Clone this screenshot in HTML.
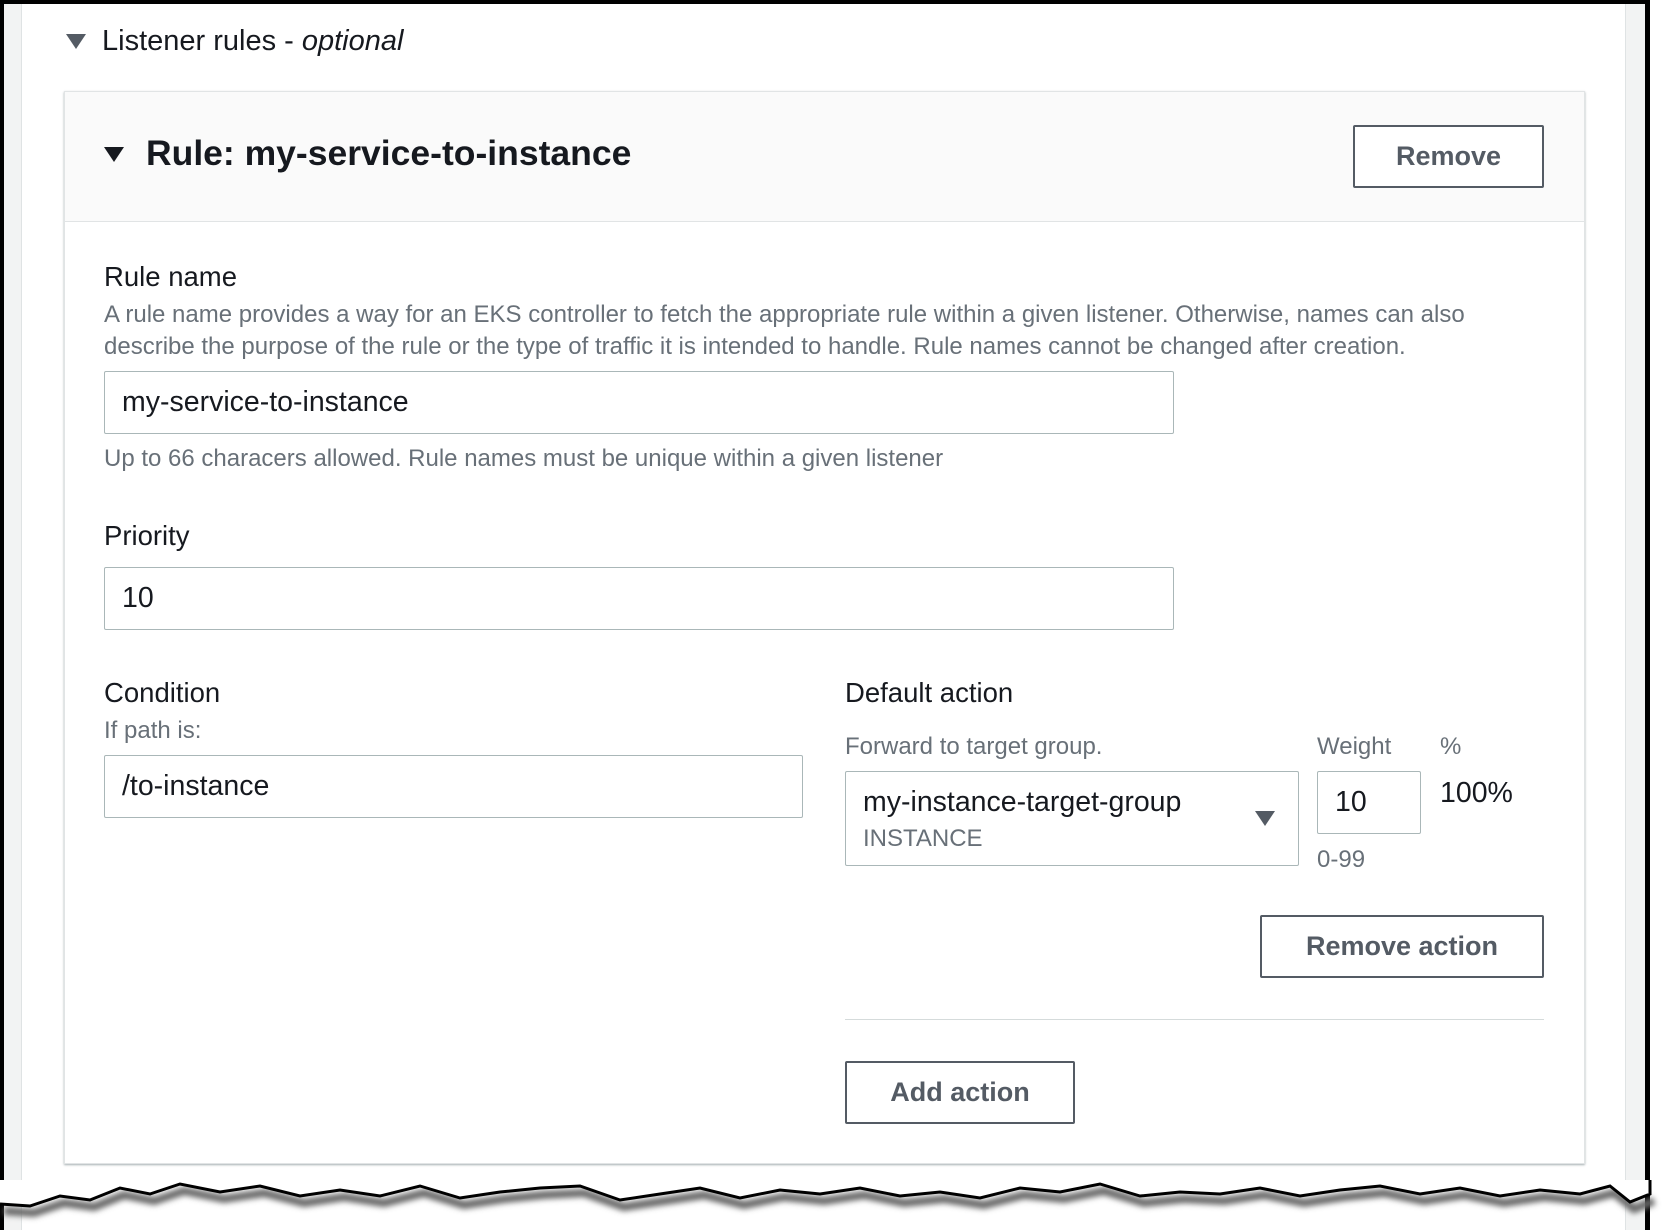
<!DOCTYPE html>
<html><head><meta charset="utf-8"><style>
*{margin:0;padding:0;box-sizing:border-box}
body{width:1668px;height:1232px;background:#fff;position:relative;overflow:hidden;font-family:"Liberation Sans",sans-serif;color:#16191f}
.a{position:absolute;white-space:nowrap}
.frame{position:absolute;left:0;top:0;width:1650px;height:1230px;border-left:4px solid #000;border-top:4px solid #000;border-right:5px solid #000;background:#fff}
.strip{position:absolute;left:4px;top:4px;width:18px;height:1226px;background:#f2f3f3;border-right:1px solid #dfe3e4}
.stripr{position:absolute;left:1625px;top:4px;width:20px;height:1226px;background:#f2f3f3;border-left:1px solid #dfe3e4}
.panel{position:absolute;left:64px;top:91px;width:1521px;height:1073px;background:#fff;border:1px solid #e1e4e5;box-shadow:0 1px 2px rgba(0,28,36,.35)}
.ph{position:absolute;left:0;top:0;width:100%;height:130px;background:#fafafa;border-bottom:1px solid #e1e4e5}
.inp{position:absolute;border:1.5px solid #aab7b8;border-radius:2px;background:#fff;font-size:28.5px;padding-left:17px;display:flex;align-items:center}
.btn{position:absolute;border:2px solid #545b64;border-radius:2px;background:#fff;font-weight:bold;font-size:27px;color:#545b64;display:flex;align-items:center;justify-content:center}
.lbl{font-size:27.5px}
.desc{font-size:24px;color:#687078}
</style></head><body>
<div class="frame"></div>
<div class="strip"></div><div class="stripr"></div>
<div class="a" style="left:66px;top:34px;width:0;height:0;border-left:10px solid transparent;border-right:10px solid transparent;border-top:15px solid #545b64"></div>
<div class="a" style="left:102px;top:25px;font-size:29px">Listener rules - <i>optional</i></div>
<div class="panel"><div class="ph"></div></div>
<div class="a" style="left:104px;top:147px;width:0;height:0;border-left:10px solid transparent;border-right:10px solid transparent;border-top:15px solid #16191f"></div>
<div class="a" style="left:146px;top:133px;font-size:35.5px;font-weight:bold">Rule: my-service-to-instance</div>
<div class="btn" style="left:1353px;top:125px;width:191px;height:63px">Remove</div>

<div class="a lbl" style="left:104px;top:261px">Rule name</div>
<div class="a desc" style="left:104px;top:301px">A rule name provides a way for an EKS controller to fetch the appropriate rule within a given listener. Otherwise, names can also</div>
<div class="a desc" style="left:104px;top:333px">describe the purpose of the rule or the type of traffic it is intended to handle. Rule names cannot be changed after creation.</div>
<div class="inp" style="left:104px;top:371px;width:1070px;height:63px">my-service-to-instance</div>
<div class="a desc" style="left:104px;top:445px">Up to 66 characers allowed. Rule names must be unique within a given listener</div>

<div class="a lbl" style="left:104px;top:520px">Priority</div>
<div class="inp" style="left:104px;top:567px;width:1070px;height:63px">10</div>

<div class="a lbl" style="left:104px;top:677px">Condition</div>
<div class="a desc" style="left:104px;top:717px">If path is:</div>
<div class="inp" style="left:104px;top:755px;width:699px;height:63px">/to-instance</div>

<div class="a lbl" style="left:845px;top:677px">Default action</div>
<div class="a desc" style="left:845px;top:733px">Forward to target group.</div>
<div class="a desc" style="left:1317px;top:733px">Weight</div>
<div class="a desc" style="left:1440px;top:733px">%</div>
<div class="inp" style="left:845px;top:771px;width:454px;height:95px;display:block;padding-top:14px">my-instance-target-group<div style="font-size:24px;color:#687078;margin-top:6px">INSTANCE</div></div>
<div class="a" style="left:1255px;top:811px;width:0;height:0;border-left:10px solid transparent;border-right:10px solid transparent;border-top:15px solid #545b64"></div>
<div class="inp" style="left:1317px;top:771px;width:104px;height:63px">10</div>
<div class="a lbl" style="left:1440px;top:777px;font-size:28.5px">100%</div>
<div class="a desc" style="left:1317px;top:846px">0-99</div>

<div class="btn" style="left:1260px;top:915px;width:284px;height:63px">Remove action</div>
<div class="a" style="left:845px;top:1019px;width:699px;height:1px;background:#d5dbdb"></div>
<div class="btn" style="left:845px;top:1061px;width:230px;height:63px">Add action</div>

<svg class="a" style="left:0;top:1180px" width="1668" height="52" viewBox="0 0 1668 52">
<defs><filter id="s" x="-5%" y="-50%" width="110%" height="200%"><feGaussianBlur stdDeviation="3"/></filter></defs>
<path id="j" d="M0 24 L30 26 L60 16 L90 20 L120 8 L150 14 L180 4 L220 12 L260 6 L300 16 L340 10 L380 16 L420 6 L460 18 L500 12 L540 8 L580 6 L620 20 L660 14 L700 8 L740 18 L780 10 L820 14 L860 8 L900 16 L940 12 L980 18 L1020 8 L1060 12 L1100 4 L1140 16 L1180 12 L1220 14 L1260 8 L1300 16 L1340 10 L1380 6 L1420 14 L1460 8 L1500 16 L1540 10 L1580 14 L1610 6 L1630 22 L1650 14" fill="none" stroke="#666" stroke-width="8" filter="url(#s)" transform="translate(4,7)"/>
<path d="M0 0 L1650 0 L1650 14 L1630 22 L1610 6 L1580 14 L1540 10 L1500 16 L1460 8 L1420 14 L1380 6 L1340 10 L1300 16 L1260 8 L1220 14 L1180 12 L1140 16 L1100 4 L1060 12 L1020 8 L980 18 L940 12 L900 16 L860 8 L820 14 L780 10 L740 18 L700 8 L660 14 L620 20 L580 6 L540 8 L500 12 L460 18 L420 6 L380 16 L340 10 L300 16 L260 6 L220 12 L180 4 L150 14 L120 8 L90 20 L60 16 L30 26 L0 24 Z" fill="#fff"/>
<path d="M0 24 L30 26 L60 16 L90 20 L120 8 L150 14 L180 4 L220 12 L260 6 L300 16 L340 10 L380 16 L420 6 L460 18 L500 12 L540 8 L580 6 L620 20 L660 14 L700 8 L740 18 L780 10 L820 14 L860 8 L900 16 L940 12 L980 18 L1020 8 L1060 12 L1100 4 L1140 16 L1180 12 L1220 14 L1260 8 L1300 16 L1340 10 L1380 6 L1420 14 L1460 8 L1500 16 L1540 10 L1580 14 L1610 6 L1630 22 L1650 14 L1650 0" fill="none" stroke="#000" stroke-width="3"/>
</svg>
</body></html>
